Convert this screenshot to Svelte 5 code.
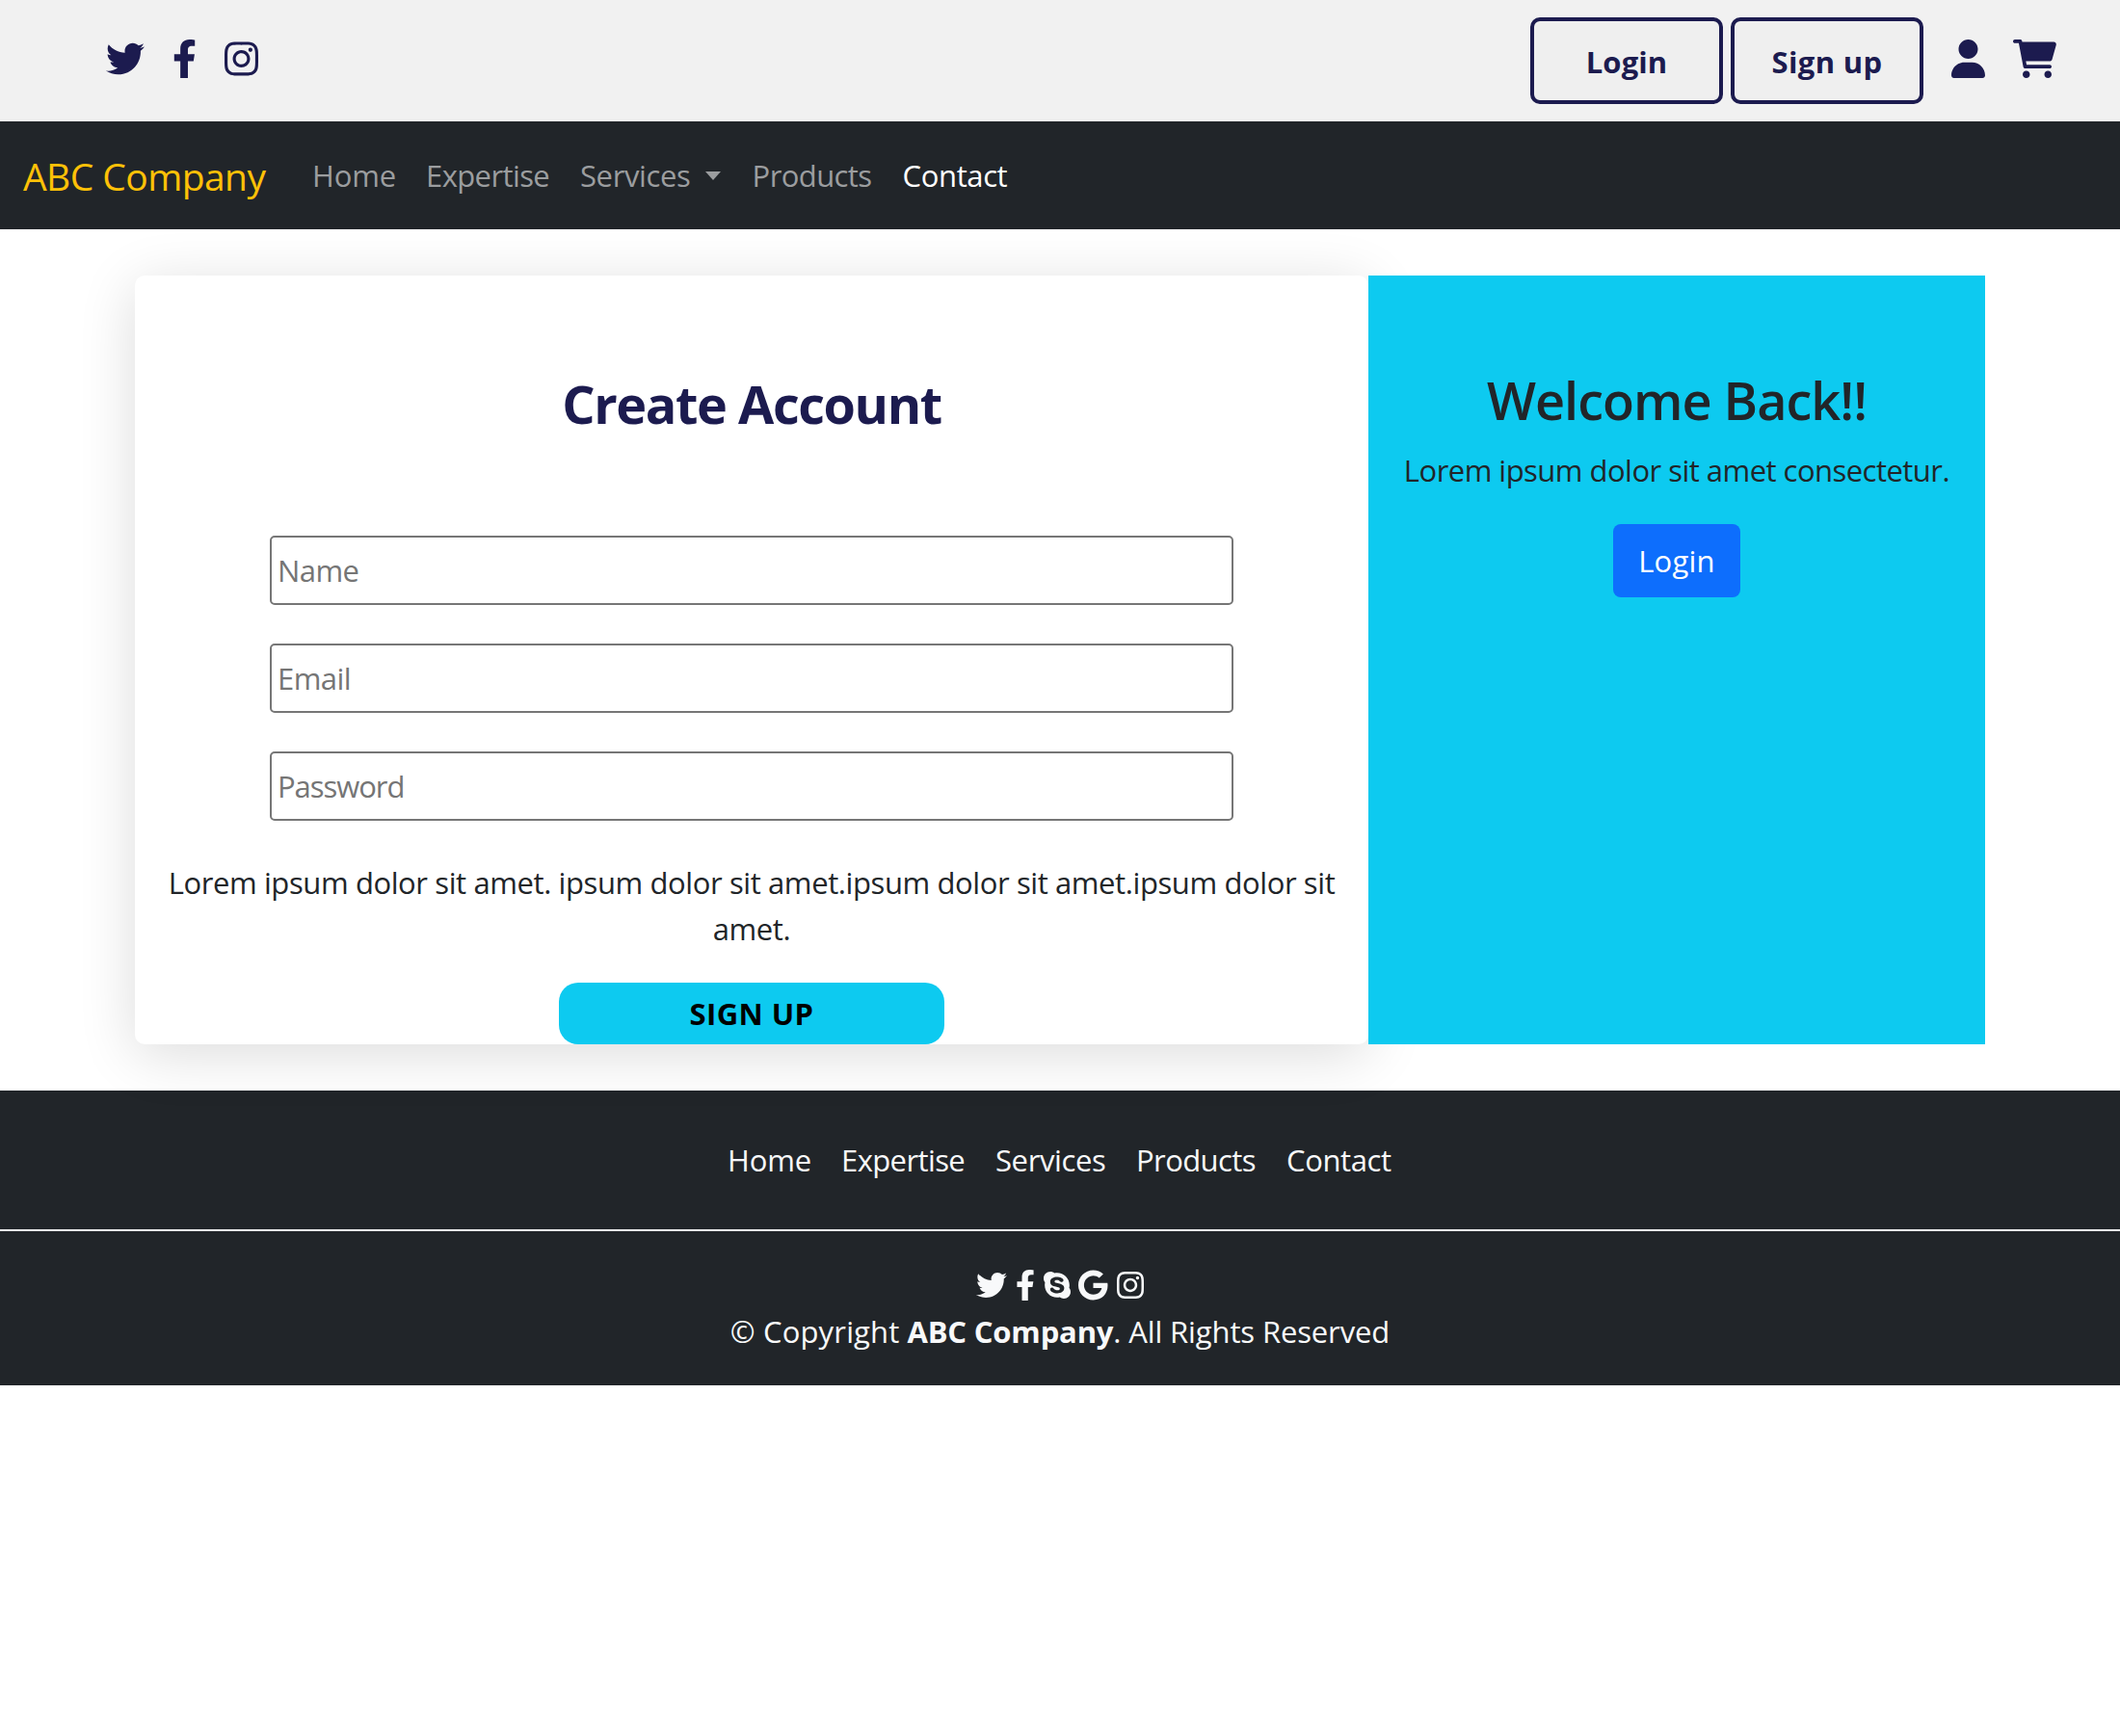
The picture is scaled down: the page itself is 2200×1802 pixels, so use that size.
<script>
  const icons = {
    twitter: {
      w: 512,
      d: 'M459.37 151.716c.325 4.548.325 9.097.325 13.645 0 138.72-105.583 298.558-298.558 298.558-59.452 0-114.68-17.219-161.137-47.106 8.447.974 16.568 1.299 25.34 1.299 49.055 0 94.213-16.568 130.274-44.832-46.132-.975-84.792-31.188-98.112-72.772 6.498.974 12.995 1.624 19.818 1.624 9.421 0 18.843-1.3 27.614-3.573-48.081-9.747-84.143-51.98-84.143-102.985v-1.299c13.969 7.797 30.214 12.67 47.431 13.319-28.264-18.843-46.781-51.005-46.781-87.391 0-19.492 5.197-37.36 14.294-52.954 51.655 63.675 129.3 105.258 216.365 109.807-1.624-7.797-2.599-15.918-2.599-24.04 0-57.828 46.782-104.934 104.934-104.934 30.213 0 57.502 12.67 76.67 33.137 23.715-4.548 46.456-13.32 66.599-25.34-7.798 24.366-24.366 44.833-46.132 57.827 21.117-2.273 41.584-8.122 60.426-16.243-14.292 20.791-32.161 39.308-52.628 54.253z'
    },
    facebook: {
      w: 320,
      d: 'M279.14 288l14.22-92.66h-88.91v-60.13c0-25.35 12.42-50.06 52.24-50.06h40.42V6.26S260.43 0 225.36 0c-73.22 0-121.08 44.38-121.08 124.72v70.62H22.89V288h81.39v224h100.17V288z'
    },
    skype: {
      w: 448,
      d: 'M424.7 299.8c2.9-14 4.7-28.9 4.7-43.8 0-113.5-91.9-205.3-205.3-205.3-14.9 0-29.7 1.7-43.8 4.7C161.3 40.7 137.7 32 112 32 50.2 32 0 82.2 0 144c0 25.7 8.7 49.3 23.3 68.2-2.9 14-4.7 28.9-4.7 43.8 0 113.5 91.9 205.3 205.3 205.3 14.9 0 29.7-1.7 43.8-4.7 19 14.6 42.6 23.3 68.2 23.3 61.8 0 112-50.2 112-112 .1-25.6-8.6-49.2-23.2-68.1zm-194.6 91.5c-65.6 0-120.5-29.2-120.5-65 0-16 9-30.6 29.5-30.6 31.2 0 34.1 44.9 88.1 44.9 25.7 0 42.3-11.4 42.3-26.3 0-18.7-16-21.6-42-28-62.5-15.4-117.8-22-117.8-87.2 0-59.2 58.6-81.1 109.1-81.1 55.1 0 110.8 21.9 110.8 55.4 0 16.9-11.4 31.8-30.3 31.8-28.3 0-29.2-33.5-75-33.5-25.7 0-42 7-42 22.5 0 19.8 20.8 21.8 69.1 33 41.4 9.3 90.7 26.8 90.7 77.6 0 59.1-57.1 86.5-112 86.5z'
    },
    google: {
      w: 488,
      d: 'M488 261.8C488 403.3 391.1 504 248 504 110.8 504 0 393.2 0 256S110.8 8 248 8c66.8 0 123 24.5 166.3 64.9l-67.5 64.9C258.5 52.6 94.3 116.6 94.3 256c0 86.5 69.1 156.6 153.7 156.6 98.2 0 135-70.4 140.8-106.9H248v-85.3h236.1c2.3 12.7 3.9 24.9 3.9 41.4z'
    },
    instagram: {
      w: 448,
      d: 'M224.1 141c-63.6 0-114.9 51.3-114.9 114.9s51.3 114.9 114.9 114.9S339 319.5 339 255.9 287.7 141 224.1 141zm0 189.6c-41.1 0-74.7-33.5-74.7-74.7s33.5-74.7 74.7-74.7 74.7 33.5 74.7 74.7-33.6 74.7-74.7 74.7zm146.4-194.3c0 14.9-12 26.8-26.8 26.8-14.9 0-26.8-12-26.8-26.8s12-26.8 26.8-26.8 26.8 12 26.8 26.8zm76.1 27.2c-1.7-35.9-9.9-67.7-36.2-93.9-26.2-26.2-58-34.4-93.9-36.2-37-2.1-147.9-2.1-184.9 0-35.8 1.7-67.6 9.9-93.9 36.1s-34.4 58-36.2 93.9c-2.1 37-2.1 147.9 0 184.9 1.7 35.9 9.9 67.7 36.2 93.9s58 34.4 93.9 36.2c37 2.1 147.9 2.1 184.9 0 35.9-1.7 67.7-9.9 93.9-36.2 26.2-26.2 34.4-58 36.2-93.9 2.1-37 2.1-147.8 0-184.8zM398.8 388c-7.8 19.6-22.9 34.7-42.6 42.6-29.5 11.7-99.5 9-132.1 9s-102.7 2.6-132.1-9c-19.6-7.8-34.7-22.9-42.6-42.6-11.7-29.5-9-99.5-9-132.1s-2.6-102.7 9-132.1c7.8-19.6 22.9-34.7 42.6-42.6 29.5-11.7 99.5-9 132.1-9s102.7-2.6 132.1 9c19.6 7.8 34.7 22.9 42.6 42.6 11.7 29.5 9 99.5 9 132.1s2.7 102.7-9 132.1z'
    },
    user: {
      w: 448,
      d: 'M224 256c70.7 0 128-57.31 128-128s-57.3-128-128-128C153.3 0 96 57.31 96 128S153.3 256 224 256zM274.7 304H173.3C77.61 304 0 381.6 0 477.3c0 19.14 15.52 34.67 34.66 34.67h378.7C432.5 512 448 496.5 448 477.3C448 381.6 370.4 304 274.7 304z'
    },
    cart: {
      w: 576,
      d: 'M96 0C107.5 0 117.4 8.19 119.6 19.51L121.1 32H541.8C562.1 32 578.3 52.25 572.6 72.66L518.6 264.7C514.7 278.5 502.1 288 487.8 288H170.7L179.9 336H488C501.3 336 512 346.7 512 360C512 373.3 501.3 384 488 384H159.1C148.5 384 138.6 375.8 136.4 364.5L76.14 48H24C10.75 48 0 37.25 0 24C0 10.75 10.75 0 24 0H96zM128 464C128 437.5 149.5 416 176 416C202.5 416 224 437.5 224 464C224 490.5 202.5 512 176 512C149.5 512 128 490.5 128 464zM512 464C512 490.5 490.5 512 464 512C437.5 512 416 490.5 416 464C416 437.5 437.5 416 464 416C490.5 416 512 437.5 512 464z'
    }
  };

  const pages = ['Home', 'Expertise', 'Services', 'Products', 'Contact'];
  const fields = [
    { label: 'Name', type: 'text' },
    { label: 'Email', type: 'email' },
    { label: 'Password', type: 'password' }
  ];
</script>

{#snippet icon(name)}
  <svg class="icon" viewBox="0 0 {icons[name].w} 512" aria-hidden="true"><path d={icons[name].d} /></svg>
{/snippet}

<header class="topbar">
  <div class="social">
    {@render icon('twitter')}
    {@render icon('facebook')}
    {@render icon('instagram')}
  </div>
  <div class="account">
    <button class="outline">Login</button>
    <button class="outline signup">Sign up</button>
    <div class="tools">
      {@render icon('user')}
      {@render icon('cart')}
    </div>
  </div>
</header>

<nav class="navbar">
  <span class="brand">ABC Company</span>
  <div class="links">
    {#each pages as page}
      <span class="link {page.toLowerCase()}" class:active={page === 'Contact'}>
        {page}{#if page === 'Services'}<i class="caret"></i>{/if}
      </span>
    {/each}
  </div>
</nav>

<main class="panels">
  <section class="create">
    <h1>Create Account</h1>
    <form>
      {#each fields as field}
        <input type={field.type} placeholder={field.label} />
      {/each}
    </form>
    <p>Lorem ipsum dolor sit amet. ipsum dolor sit amet.ipsum dolor sit amet.ipsum dolor sit amet.</p>
    <button class="submit">SIGN UP</button>
  </section>
  <section class="welcome">
    <h2>Welcome Back!!</h2>
    <p>Lorem ipsum dolor sit amet consectetur.</p>
    <button class="primary">Login</button>
  </section>
</main>

<footer>
  <div class="links footer-links">
    {#each pages as page}
      <span class="link {page.toLowerCase()}">{page}</span>
    {/each}
  </div>
  <div class="legal">
    <div class="footer-icons">
      {#each ['twitter', 'facebook', 'skype', 'google', 'instagram'] as name}
        {@render icon(name)}
      {/each}
    </div>
    <div class="copyright"><span class="lead">© Copyright</span> <strong>ABC Company</strong>. All Rights Reserved</div>
  </div>
</footer>

<style>
  :global(body) {
    margin: 0;
    background: #fff;
    color: #212529;
    font: 400 31px/48px 'Open Sans', 'Noto Sans', sans-serif;
  }

  button,
  input {
    box-sizing: border-box;
    margin: 0;
    font: inherit;
  }

  .icon {
    display: block;
    flex: none;
    height: 40px;
    fill: currentColor;
  }

  .topbar {
    display: flex;
    justify-content: space-between;
    box-sizing: border-box;
    height: 126px;
    padding: 18px 66px 18px 110px;
    background: #f1f1f1;
    color: #1c1b4f;
  }

  .social,
  .tools {
    display: flex;
    gap: 29px;
    padding-top: 23px;
  }

  .account {
    display: flex;
    gap: 8px;
  }

  .tools {
    margin-left: 21px;
  }

  .outline {
    width: 200px;
    height: 90px;
    padding: 2px 0 0;
    border: 4px solid #1c1b4f;
    border-radius: 10px;
    background: #efefef;
    color: #1c1b4f;
    font-weight: 700;
    letter-spacing: 0.003em;
  }

  .signup {
    letter-spacing: 0.0116em;
  }

  .navbar {
    display: flex;
    align-items: center;
    height: 112px;
    padding-left: 24px;
    background: #212529;
  }

  .brand {
    width: 300px;
    padding-top: 2px;
    color: #ffc107;
    font-size: 39px;
    letter-spacing: -0.0145em;
    white-space: nowrap;
  }

  .links {
    display: flex;
    color: #9b9d9f;
  }

  .link {
    display: flex;
    align-items: center;
  }

  .home {
    width: 118px;
    letter-spacing: -0.004em;
  }

  .expertise {
    width: 160px;
    letter-spacing: -0.0193em;
  }

  .services {
    width: 178.6px;
    letter-spacing: -0.0122em;
  }

  .products {
    width: 156px;
    letter-spacing: -0.0191em;
  }

  .contact {
    width: 110px;
    letter-spacing: -0.0124em;
  }

  .active {
    color: #fff;
  }

  .caret {
    margin-left: 16px;
    border: 8.5px solid transparent;
    border-top: 9px solid currentColor;
    border-bottom: 0;
  }

  .panels {
    display: flex;
    height: 798px;
    padding: 48px 140px;
    text-align: center;
  }

  .create {
    display: flex;
    flex-direction: column;
    align-items: center;
    width: 1280px;
    border-radius: 10px;
    background: #fff;
    box-shadow: 0 10px 60px rgba(0, 0, 0, 0.14);
  }

  h1,
  h2,
  p {
    margin: 0;
  }

  h1 {
    margin-top: 100px;
    color: #1c1b4f;
    font-size: 54px;
    line-height: 67px;
    font-weight: 700;
    letter-spacing: -0.0265em;
  }

  form {
    display: flex;
    flex-direction: column;
    gap: 40px;
    width: 1000px;
    margin-top: 103px;
  }

  input {
    width: 100%;
    height: 72px;
    padding: 0 6px;
    border: 2px solid #767676;
    border-radius: 5px;
    background: #fff;
    letter-spacing: -0.018em;
  }

  input[type='password'] {
    letter-spacing: -0.034em;
  }

  input::placeholder {
    color: #757575;
    opacity: 1;
  }

  p {
    letter-spacing: -0.0129em;
  }

  .create p {
    width: 1232px;
    margin-top: 40px;
  }

  .submit {
    width: 400px;
    height: 64px;
    margin-top: 32px;
    padding: 0;
    border: 0;
    border-radius: 20px;
    background: #0dcaf0;
    color: #000;
    font-weight: 700;
    letter-spacing: 0.014em;
  }

  .welcome {
    position: relative;
    display: flex;
    flex-direction: column;
    align-items: center;
    width: 640px;
    background: #0dcaf0;
  }

  h2 {
    margin-top: 96px;
    font-size: 54px;
    line-height: 67px;
    font-weight: 600;
    letter-spacing: -0.0185em;
  }

  .welcome p {
    margin-top: 15px;
    letter-spacing: -0.017em;
  }

  .primary {
    width: 132px;
    height: 76px;
    margin-top: 32px;
    padding: 0;
    border: 0;
    border-radius: 8px;
    background: #0d6efd;
    color: #fff;
    letter-spacing: 0.008em;
  }

  footer {
    height: 306px;
    background: #212529;
    color: #f8f9fa;
  }

  .footer-links {
    box-sizing: border-box;
    height: 144px;
    justify-content: center;
    color: #f8f9fa;
  }

  .footer-links .services {
    width: 146px;
  }

  .legal {
    display: flex;
    flex-direction: column;
    align-items: center;
    padding-top: 40px;
    border-top: 2px solid #f1f2f3;
  }

  .footer-icons {
    display: flex;
    gap: 8.7px;
  }

  .footer-icons .icon {
    height: 32px;
  }

  .copyright {
    margin-top: 8px;
    letter-spacing: -0.004em;
  }

  .lead {
    letter-spacing: 0.005em;
  }

  strong {
    font-weight: 700;
    letter-spacing: -0.0055em;
  }
</style>
